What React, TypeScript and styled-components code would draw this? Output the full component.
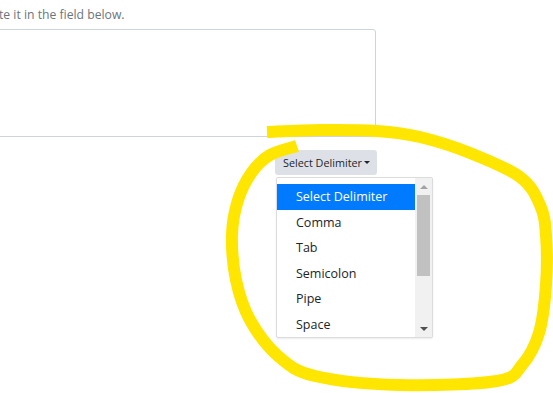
import React from "react"
import styled, { createGlobalStyle } from "styled-components"

const GlobalStyle = createGlobalStyle`
	html, body {
		margin: 0;
		padding: 0;
		background: #fff;
	}
	body {
		font-family: "Open Sans", "Noto Sans", sans-serif;
		color: #212529;
		overflow: hidden;
	}
`

const Page = styled.div`
	position: relative;
	width: 553px;
	height: 393px;
	overflow: hidden;
`

const Column = styled.div`
	width: 377px;
	padding-top: 6px;
`

const Hint = styled.p`
	margin: 0 0 0 -1px;
	font-size: 12.2px;
	line-height: 17px;
	color: #6c757d;
	white-space: nowrap;
`

const Field = styled.textarea`
	display: block;
	box-sizing: border-box;
	width: 397px;
	height: 108px;
	margin: 6px 0 0 -21px;
	border: 1px solid #ced4da;
	border-radius: 3px;
	resize: none;
	outline: none;
`

const Dropdown = styled.div`
	position: relative;
	margin: 13px 0 0 275px;
	width: 102px;
`

const Toggle = styled.button`
	display: flex;
	align-items: center;
	box-sizing: border-box;
	width: 102px;
	height: 25px;
	padding: 0 0 0 8px;
	border: none;
	border-radius: 3px;
	background: #dde1e7;
	color: #212529;
	font-family: "Open Sans", "Noto Sans", sans-serif;
	font-size: 10.8px;
	cursor: pointer;

	&::after {
		content: "";
		margin-left: 2px;
		border-top: 3.5px solid #212529;
		border-left: 3px solid transparent;
		border-right: 3px solid transparent;
	}
`

const Menu = styled.div`
	position: absolute;
	top: 27px;
	left: 1px;
	display: flex;
	box-sizing: border-box;
	width: 157px;
	height: 161px;
	border: 1px solid #dcdcdc;
	border-radius: 2px;
	background: #fff;
	box-shadow: 0 1px 2px rgba(0, 0, 0, 0.08);
	overflow: hidden;
`

const Options = styled.ul`
	flex: 1;
	margin: 0;
	padding: 6px 0 0;
	list-style: none;
`

const Option = styled.li<{ $active?: boolean }>`
	height: 25.6px;
	padding-left: 19px;
	font-size: 12.5px;
	line-height: 26.5px;
	background: ${p => (p.$active ? "#007bff" : "transparent")};
	color: ${p => (p.$active ? "#fff" : "#212529")};
	white-space: nowrap;
`

const Scrollbar = styled.div`
	display: flex;
	flex-direction: column;
	align-items: center;
	width: 17px;
	background: #f1f1f1;
`

const Arrow = styled.div<{ $down?: boolean }>`
	height: 17px;
	display: flex;
	align-items: center;
	justify-content: center;

	&::before {
		content: "";
		border-left: 4px solid transparent;
		border-right: 4px solid transparent;
		${p =>
			p.$down
				? "border-top: 4px solid #505050;"
				: "border-bottom: 4px solid #a3a3a3;"}
	}
`

const Thumb = styled.div`
	width: 13px;
	height: 81px;
	background: #c1c1c1;
`

const Spacer = styled.div`
	flex: 1;
`

const Scribble = styled.svg`
	position: absolute;
	inset: 0;
	pointer-events: none;
`

const delimiters = ["Select Delimiter", "Comma", "Tab", "Semicolon", "Pipe", "Space"]

const loop: [number, number][] = [
	[297, 146], [270, 155], [252, 172], [238, 200], [232, 235], [236, 280],
	[250, 320], [278, 356], [315, 376], [400, 385], [497, 381], [522, 365],
	[539, 333], [546, 285], [546, 235], [540, 205], [520, 177], [470, 153],
	[420, 137], [377, 131], [320, 130], [267, 132],
]

const smooth = (pts: [number, number][]) => {
	let d = `M${pts[0][0]} ${pts[0][1]}`
	for (let i = 0; i < pts.length - 1; i++) {
		const p0 = pts[i - 1] || pts[i]
		const p1 = pts[i]
		const p2 = pts[i + 1]
		const p3 = pts[i + 2] || p2
		const c1 = [p1[0] + (p2[0] - p0[0]) / 6, p1[1] + (p2[1] - p0[1]) / 6]
		const c2 = [p2[0] - (p3[0] - p1[0]) / 6, p2[1] - (p3[1] - p1[1]) / 6]
		d += ` C${c1[0]} ${c1[1]} ${c2[0]} ${c2[1]} ${p2[0]} ${p2[1]}`
	}
	return d
}

export default function App() {
	return (
		<Page>
			<GlobalStyle />
			<Column>
				<Hint>te it in the field below.</Hint>
				<Field />
				<Dropdown>
					<Toggle>Select Delimiter</Toggle>
					<Menu>
						<Options>
							{delimiters.map((d, i) => (
								<Option key={d} $active={i === 0}>
									{d}
								</Option>
							))}
						</Options>
						<Scrollbar>
							<Arrow />
							<Thumb />
							<Spacer />
							<Arrow $down />
						</Scrollbar>
					</Menu>
				</Dropdown>
			</Column>
			<Scribble width="553" height="393" viewBox="0 0 553 393">
				<path
					d={smooth(loop)}
					fill="none"
					stroke="#ffe600"
					strokeWidth="12"
					strokeLinejoin="round"
				/>
			</Scribble>
		</Page>
	)
}
